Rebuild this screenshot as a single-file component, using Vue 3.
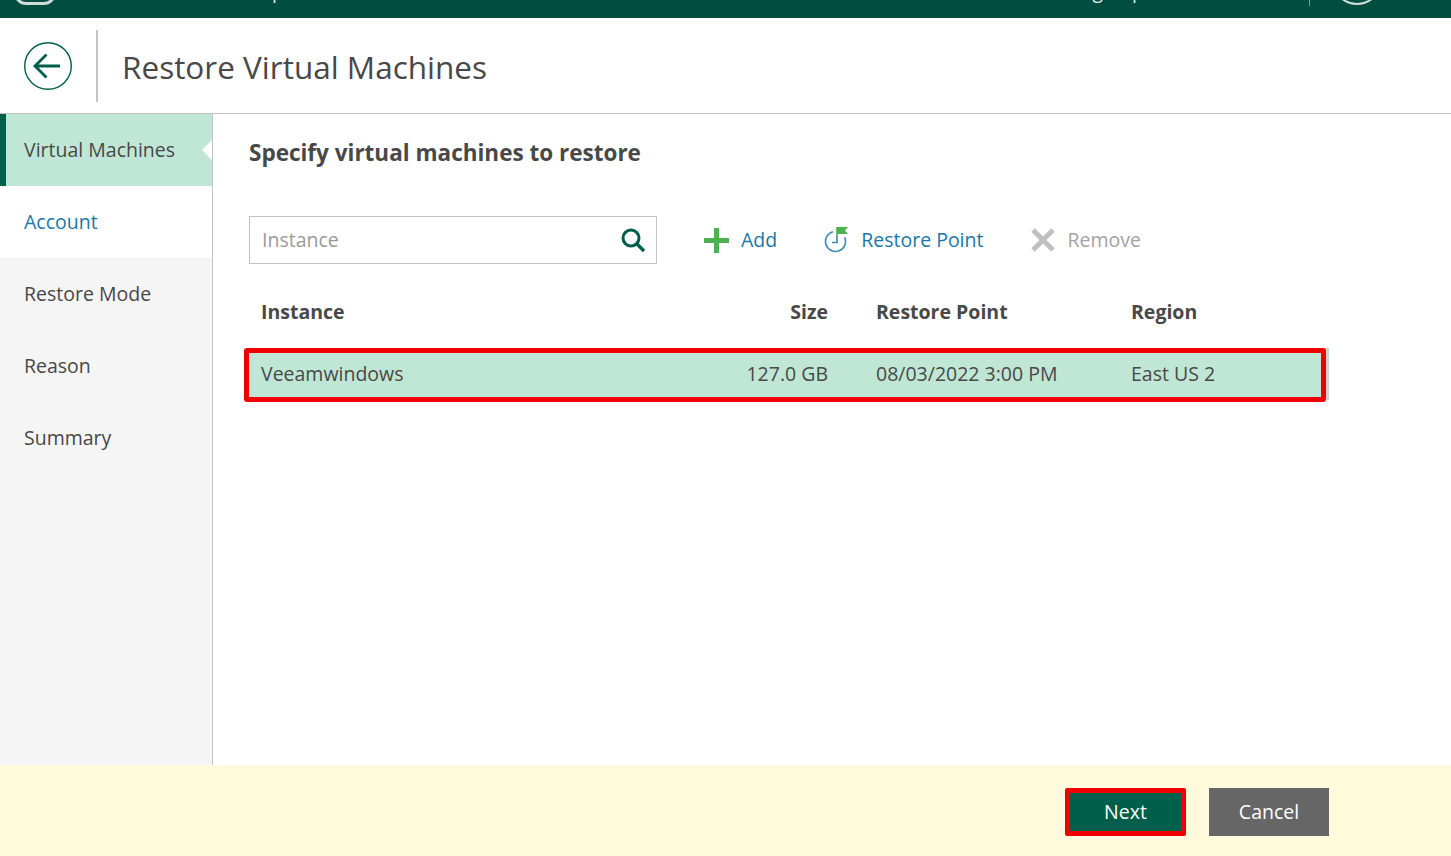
<template>
  <div class="page">
    <div class="topbar">
      <div class="logo"></div>
      <span class="product">Veeam Backup</span>
      <span class="top-link">Sign up</span>
      <div class="top-sep"></div>
      <div class="user-icon"></div>
      <span class="portal">Portal</span>
    </div>

    <header class="header">
      <button class="back">
        <svg width="48" height="48" viewBox="0 0 48 48" fill="none">
          <circle cx="24" cy="24" r="23.3" stroke="#005f4b" stroke-width="1.4" />
          <path d="M36 24H11M22.500 12.500 11 24l11.500 11.500" stroke="#005f4b" stroke-width="2.800" />
        </svg>
      </button>
      <div class="header-sep"></div>
      <h1 class="title">Restore Virtual Machines</h1>
    </header>

    <div class="body">
      <nav class="side">
        <div
          v-for="step in steps"
          :key="step.label"
          :class="['step', step.state]"
        >
          {{ step.label }}
        </div>
      </nav>

      <main class="content">
        <h2 class="heading">Specify virtual machines to restore</h2>

        <div class="toolbar">
          <div class="search">
            <span class="placeholder">Instance</span>
            <svg width="26" height="26" viewBox="0 0 26 26" fill="none">
              <circle cx="11" cy="11" r="8" stroke="#005f4b" stroke-width="3" />
              <path d="M16.5 16.5 24 24" stroke="#005f4b" stroke-width="3.4" />
            </svg>
          </div>

          <div class="action action-add">
            <svg width="25" height="25" viewBox="0 0 25 25">
              <path d="M10 0h5v10h10v5H15v10h-5V15H0v-5h10z" fill="#4db151" />
            </svg>
            <span>Add</span>
          </div>

          <div class="action action-point">
            <svg width="25" height="26" viewBox="0 0 25 26" fill="none">
              <path d="M9 4.800A10 10 0 1 0 20.600 10.300" stroke="#3d87b8" stroke-width="1.600" />
              <path d="M13 8v7.500H8" stroke="#3d87b8" stroke-width="1.600" />
              <path d="M13 0v8" stroke="#4db151" stroke-width="1.600" />
              <path d="M13 0h11l-3 3.500L24 7H13z" fill="#4db151" />
            </svg>
            <span>Restore Point</span>
          </div>

          <div class="action action-remove">
            <svg width="24" height="24" viewBox="0 0 24 24" fill="none">
              <path d="M2 2 22 22M22 2 2 22" stroke="#c0c0c0" stroke-width="5" />
            </svg>
            <span>Remove</span>
          </div>
        </div>

        <div class="table">
          <div class="row head">
            <div>Instance</div>
            <div class="num">Size</div>
            <div class="point">Restore Point</div>
            <div>Region</div>
          </div>
          <div v-for="vm in vms" :key="vm.name" class="row selected">
            <div>{{ vm.name }}</div>
            <div class="num">{{ vm.size }}</div>
            <div class="point">{{ vm.point }}</div>
            <div>{{ vm.region }}</div>
            <div class="mark"></div>
          </div>
        </div>
      </main>
    </div>

    <footer class="footer">
      <button class="btn next">Next</button>
      <button class="btn cancel">Cancel</button>
    </footer>
  </div>
</template>

<script setup>
const steps = [
  { label: 'Virtual Machines', state: 'active' },
  { label: 'Account', state: 'current' },
  { label: 'Restore Mode', state: '' },
  { label: 'Reason', state: '' },
  { label: 'Summary', state: '' }
]

const vms = [
  { name: 'Veeamwindows', size: '127.0 GB', point: '08/03/2022 3:00 PM', region: 'East US 2' }
]
</script>

<style>
html,
body {
  margin: 0;
  overflow: hidden;
}
</style>

<style scoped>
.page {
  width: 1451px;
  height: 856px;
  display: flex;
  flex-direction: column;
  background: #fff;
  font-family: "Open Sans", "Liberation Sans", sans-serif;
  font-size: 19.5px;
  color: #484848;
  overflow: hidden;
}

.topbar {
  flex: 0 0 18px;
  height: 18px;
  display: flex;
  align-items: flex-end;
  background: #004e3f;
  color: #dfe9e6;
  overflow: hidden;
}

.logo {
  flex: none;
  width: 36px;
  height: 30px;
  margin-left: 14px;
  margin-bottom: 13px;
  border: 3px solid #cfdcd8;
  border-radius: 12px;
}

.product {
  flex: none;
  width: 228px;
  margin-bottom: 14px;
  line-height: 27px;
  text-align: right;
}

.top-link {
  flex: none;
  width: 860px;
  margin-bottom: 14px;
  line-height: 27px;
  text-align: right;
}

.top-sep {
  flex: none;
  width: 1px;
  height: 6px;
  margin-left: 165px;
  margin-bottom: 12px;
  background: #7f9f97;
}

.user-icon {
  flex: none;
  width: 46px;
  height: 46px;
  margin-left: 22px;
  margin-bottom: 13px;
  border: 2px solid #cfdcd8;
  border-radius: 50%;
}

.portal {
  flex: none;
  margin-left: 13px;
  margin-bottom: 12px;
  line-height: 27px;
}

.header {
  flex: 0 0 96px;
  box-sizing: border-box;
  display: flex;
  align-items: center;
  padding-left: 24px;
  border-bottom: 1px solid #c4c4c4;
}

.back {
  width: 48px;
  height: 48px;
  padding: 0;
  border: 0;
  background: none;
}

.back svg {
  display: block;
}

.header-sep {
  width: 2px;
  height: 72px;
  margin-left: 24px;
  background: #c4c4c4;
}

.title {
  margin: 2px 0 0 24px;
  font-size: 31.5px;
  font-weight: 400;
  color: #484848;
}

.body {
  flex: 1;
  display: flex;
  min-height: 0;
}

.side {
  flex: 0 0 213px;
  box-sizing: border-box;
  background: #f5f5f5;
  border-right: 1px solid #c4c4c4;
}

.step {
  height: 72px;
  box-sizing: border-box;
  display: flex;
  align-items: center;
  padding: 0 0 2px 24px;
}

.step.active {
  position: relative;
  padding-left: 18px;
  background: #c0e7d5;
  border-left: 6px solid #005f4b;
}

.step.active::after {
  content: "";
  position: absolute;
  right: 0;
  top: 26px;
  border: 10px solid transparent;
  border-left-width: 0;
  border-right-color: #fff;
  border-right-width: 10px;
}

.step.current {
  background: #fff;
  color: #1a77a8;
}

.content {
  flex: 1;
  padding: 0 122px 0 36px;
  min-width: 0;
}

.heading {
  margin: 21px 0 0;
  font-size: 22.5px;
  line-height: 36px;
  font-weight: 700;
  color: #484848;
}

.toolbar {
  display: flex;
  align-items: center;
  margin-top: 45px;
}

.search {
  width: 408px;
  height: 48px;
  box-sizing: border-box;
  display: flex;
  align-items: center;
  justify-content: space-between;
  padding: 0 10px 0 12px;
  border: 1px solid #c4c4c4;
}

.placeholder {
  color: #9a9a9a;
  margin-bottom: 2px;
}

.action {
  display: flex;
  align-items: center;
  gap: 12px;
  color: #1a77a8;
}

.action span {
  margin-bottom: 2px;
}

.action-add,
.action-point {
  margin-left: 47px;
}

.action-remove {
  margin-left: 48px;
  color: #a3a3a3;
}

.table {
  margin-top: 24px;
}

.row {
  position: relative;
  display: grid;
  grid-template-columns: 470px 97px 303px 1fr;
  height: 52px;
  align-items: center;
  padding: 0 0 2px 12px;
  box-sizing: border-box;
}

.point {
  padding-left: 48px;
}

.row.head {
  height: 48px;
  margin-bottom: 12px;
  font-weight: 700;
}

.num {
  text-align: right;
}

.row.selected {
  background: #c0e7d5;
  border-right: 4px solid #c9d5cf;
}

.mark {
  position: absolute;
  left: -5px;
  right: -1px;
  top: 0;
  height: 54px;
  box-sizing: border-box;
  border: 5px solid #f00000;
  border-radius: 3px;
}

.footer {
  flex: 0 0 91px;
  box-sizing: border-box;
  display: flex;
  align-items: flex-start;
  justify-content: flex-end;
  gap: 23px;
  padding: 23px 122px 0 0;
  background: #fffadb;
}

.btn {
  height: 48px;
  border: 0;
  padding: 0 0 2px;
  font: inherit;
  color: #fff;
}

.next {
  width: 121px;
  box-sizing: border-box;
  background: #005f4b;
  border: 5px solid #f00000;
  border-radius: 2px;
}

.cancel {
  width: 120px;
  background: #666;
}
</style>
